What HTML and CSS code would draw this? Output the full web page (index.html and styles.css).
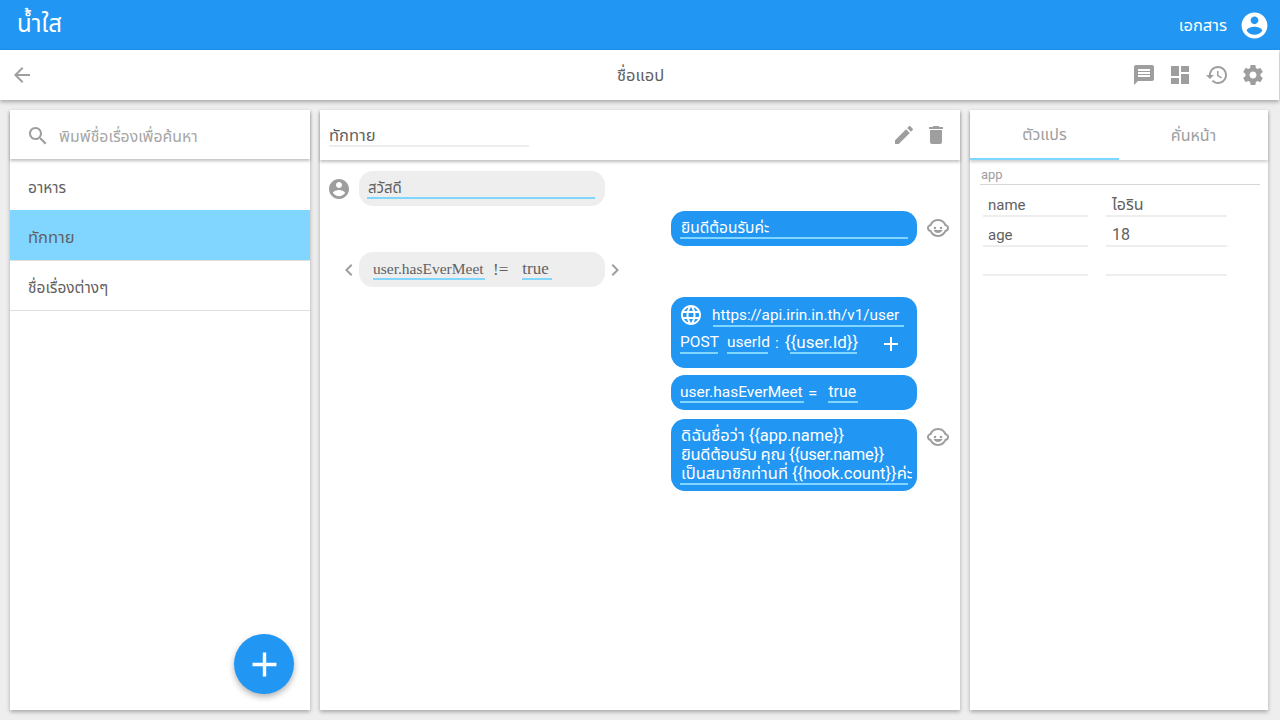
FILE: index.html
```html
<!DOCTYPE html>
<html lang="th">
<head>
    <meta charset="UTF-8">
    <meta name="viewport" content="width=device-width, initial-scale=1.0">
    <title>น้ำใส</title>
    <link rel="stylesheet" href="styles.css">
</head>
<body>
    <svg class="defs" aria-hidden="true">
        <symbol id="i-account" viewBox="0 0 24 24"><path d="M12 2C6.48 2 2 6.48 2 12s4.48 10 10 10 10-4.48 10-10S17.52 2 12 2zm0 3c1.66 0 3 1.34 3 3s-1.34 3-3 3-3-1.34-3-3 1.34-3 3-3zm0 14.2c-2.5 0-4.71-1.28-6-3.22.03-1.99 4-3.08 6-3.08 1.99 0 5.97 1.09 6 3.08-1.29 1.94-3.5 3.22-6 3.22z"/></symbol>
        <symbol id="i-child" viewBox="0 0 24 24"><circle cx="9" cy="12" r="1.25"/><circle cx="15" cy="12" r="1.25"/><path d="M22.94 12.66c.04-.21.06-.43.06-.66s-.02-.45-.06-.66c-.25-1.51-1.36-2.74-2.81-3.17-.53-1.12-1.28-2.1-2.19-2.91C16.36 3.85 14.28 3 12 3s-4.36.85-5.94 2.26c-.92.81-1.67 1.8-2.19 2.91-1.45.43-2.56 1.65-2.81 3.17-.04.21-.06.43-.06.66s.02.45.06.66c.25 1.51 1.36 2.74 2.81 3.17.52 1.11 1.27 2.09 2.17 2.89C7.62 20.14 9.71 21 12 21s4.38-.86 5.97-2.28c.9-.8 1.65-1.79 2.17-2.89 1.44-.43 2.55-1.65 2.8-3.17zM19 14c-.1 0-.19-.02-.29-.03-.2.67-.49 1.29-.86 1.86C16.6 17.74 14.45 19 12 19s-4.6-1.26-5.85-3.17c-.37-.57-.66-1.19-.86-1.86-.1.01-.19.03-.29.03-1.1 0-2-.9-2-2s.9-2 2-2c.1 0 .19.02.29.03.2-.67.49-1.29.86-1.86C7.4 6.26 9.55 5 12 5s4.6 1.26 5.85 3.17c.37.57.66 1.19.86 1.86.1-.01.19-.03.29-.03 1.1 0 2 .9 2 2s-.9 2-2 2zM7.5 14c.76 1.77 2.49 3 4.5 3s3.74-1.23 4.5-3h-9z"/></symbol>
        <symbol id="i-add" viewBox="0 0 24 24"><path d="M19 13h-6v6h-2v-6H5v-2h6V5h2v6h6v2z"/></symbol>
    </svg>

    <header class="appbar">
        <div class="brand">น้ำใส</div>
        <div class="appbar-right">
            <span class="doc-link">เอกสาร</span>
            <svg class="icon-account"><use href="#i-account"/></svg>
        </div>
    </header>

    <div class="subbar">
        <svg class="icon" viewBox="0 0 24 24"><path d="M20 11H7.83l5.59-5.59L12 4l-8 8 8 8 1.41-1.41L7.83 13H20v-2z"/></svg>
        <div class="subbar-title">ชื่อแอป</div>
        <div class="subbar-actions">
            <svg class="icon" viewBox="0 0 24 24"><path d="M20 2H4c-1.1 0-1.99.9-1.99 2L2 22l4-4h14c1.1 0 2-.9 2-2V4c0-1.1-.9-2-2-2zm-2 12H6v-2h12v2zm0-3H6V9h12v2zm0-3H6V6h12v2z"/></svg>
            <svg class="icon" viewBox="0 0 24 24"><path d="M3 13h8V3H3v10zm0 8h8v-6H3v6zm10 0h8V11h-8v10zm0-18v6h8V3h-8z"/></svg>
            <svg class="icon" viewBox="0 0 24 24"><path d="M13 3c-4.97 0-9 4.03-9 9H1l3.89 3.89.07.14L9 12H6c0-3.87 3.13-7 7-7s7 3.13 7 7-3.13 7-7 7c-1.93 0-3.68-.79-4.94-2.06l-1.42 1.42C8.27 19.99 10.51 21 13 21c4.97 0 9-4.03 9-9s-4.03-9-9-9zm-1 5v5l4.28 2.54.72-1.21-3.5-2.08V8H12z"/></svg>
            <svg class="icon" viewBox="0 0 24 24"><path d="M19.43 12.98c.04-.32.07-.64.07-.98s-.03-.66-.07-.98l2.11-1.65c.19-.15.24-.42.12-.64l-2-3.46c-.12-.22-.39-.3-.61-.22l-2.49 1c-.52-.4-1.08-.73-1.69-.98l-.38-2.65C14.46 2.18 14.25 2 14 2h-4c-.25 0-.46.18-.49.42l-.38 2.65c-.61.25-1.17.59-1.69.98l-2.49-1c-.23-.09-.49 0-.61.22l-2 3.46c-.13.22-.07.49.12.64l2.11 1.65c-.04.32-.07.65-.07.98s.03.66.07.98l-2.11 1.65c-.19.15-.24.42-.12.64l2 3.46c.12.22.39.3.61.22l2.49-1c.52.4 1.08.73 1.69.98l.38 2.65c.03.24.24.42.49.42h4c.25 0 .46-.18.49-.42l.38-2.65c.61-.25 1.17-.59 1.69-.98l2.49 1c.23.09.49 0 .61-.22l2-3.46c.12-.22.07-.49-.12-.64l-2.11-1.65zM12 15.5c-1.93 0-3.5-1.57-3.5-3.5s1.57-3.5 3.5-3.5 3.5 1.57 3.5 3.5-1.57 3.5-3.5 3.5z"/></svg>
        </div>
    </div>

    <main class="main">
        <section class="panel panel-stories">
            <div class="search">
                <svg class="icon" viewBox="0 0 24 24"><path d="M15.5 14h-.79l-.28-.27C15.41 12.59 16 11.11 16 9.5 16 5.91 13.09 3 9.5 3S3 5.91 3 9.5 5.91 16 9.5 16c1.61 0 3.09-.59 4.23-1.57l.27.28v.79l5 4.99L20.49 19l-4.99-5zm-6 0C7.01 14 5 11.99 5 9.5S7.01 5 9.5 5 14 7.01 14 9.5 11.99 14 9.5 14z"/></svg>
                <span class="search-hint">พิมพ์ชื่อเรื่องเพื่อค้นหา</span>
            </div>
            <ul class="story-list">
                <li class="story">อาหาร</li>
                <li class="story story-active">ทักทาย</li>
                <li class="story">ชื่อเรื่องต่างๆ</li>
            </ul>
            <button class="fab"><svg class="icon-fab"><use href="#i-add"/></svg></button>
        </section>

        <section class="panel panel-chat">
            <div class="chat-head">
                <span class="chat-name">ทักทาย</span>
                <div class="chat-tools">
                    <svg class="icon" viewBox="0 0 24 24"><path d="M3 17.25V21h3.75L17.81 9.94l-3.75-3.75L3 17.25zM20.71 7.04c.39-.39.39-1.02 0-1.41l-2.34-2.34c-.39-.39-1.02-.39-1.41 0l-1.83 1.83 3.75 3.75 1.83-1.83z"/></svg>
                    <svg class="icon" viewBox="0 0 24 24"><path d="M6 19c0 1.1.9 2 2 2h8c1.1 0 2-.9 2-2V7H6v12zM19 4h-3.5l-1-1h-5l-1 1H5v2h14V4z"/></svg>
                </div>
            </div>

            <div class="row row-user row-first">
                <svg class="icon"><use href="#i-account"/></svg>
                <div class="bubble bubble-gray bubble-hello"><span class="field field-full">สวัสดี</span></div>
            </div>

            <div class="row row-bot row-greet">
                <div class="bubble bubble-blue"><span class="field field-full">ยินดีต้อนรับค่ะ</span></div>
                <svg class="icon"><use href="#i-child"/></svg>
            </div>

            <div class="row row-cond">
                <svg class="chevron" viewBox="8 6 8 12"><path d="M15.41 7.41L14 6l-6 6 6 6 1.41-1.41L10.83 12z"/></svg>
                <div class="bubble bubble-gray bubble-cond">
                    <span class="field cond-left">user.hasEverMeet</span>
                    <span class="cond-op">!=</span>
                    <span class="field cond-right">true</span>
                </div>
                <svg class="chevron" viewBox="8 6 8 12"><path d="M10 6L8.59 7.41 13.17 12l-4.58 4.58L10 18l6-6z"/></svg>
            </div>

            <div class="row row-bot row-api">
                <div class="bubble bubble-blue bubble-api">
                    <div class="api-url">
                        <svg class="icon-globe" viewBox="0 0 24 24"><path d="M11.99 2C6.47 2 2 6.48 2 12s4.47 10 9.99 10C17.52 22 22 17.52 22 12S17.52 2 11.99 2zm6.93 6h-2.95c-.32-1.25-.78-2.45-1.38-3.56 1.84.63 3.37 1.91 4.33 3.56zM12 4.04c.83 1.2 1.48 2.53 1.91 3.96h-3.82c.43-1.43 1.08-2.76 1.91-3.96zM4.26 14C4.1 13.36 4 12.69 4 12s.1-1.36.26-2h3.38c-.08.66-.14 1.32-.14 2 0 .68.06 1.34.14 2H4.26zm.82 2h2.95c.32 1.25.78 2.45 1.38 3.56-1.84-.63-3.37-1.9-4.33-3.56zm2.95-8H5.08c.96-1.66 2.49-2.93 4.33-3.56C8.81 5.55 8.35 6.75 8.03 8zM12 19.96c-.83-1.2-1.48-2.53-1.91-3.96h3.82c-.43 1.43-1.08 2.76-1.91 3.96zM14.34 14H9.66c-.09-.66-.16-1.32-.16-2 0-.68.07-1.35.16-2h4.68c.09.65.16 1.32.16 2 0 .68-.07 1.34-.16 2zm.25 5.56c.6-1.11 1.06-2.31 1.38-3.56h2.95c-.96 1.65-2.49 2.93-4.33 3.56zM16.36 14c.08-.66.14-1.32.14-2 0-.68-.06-1.34-.14-2h3.38c.16.64.26 1.31.26 2s-.1 1.36-.26 2h-3.38z"/></svg>
                        <span class="field url-field">https://api.irin.in.th/v1/user</span>
                    </div>
                    <div class="api-params">
                        <span class="field method">POST</span>
                        <span class="field param-key">userId</span>
                        <span class="param-sep">:</span>
                        <span class="param-val">{{user.Id}}</span>
                        <svg class="icon-add"><use href="#i-add"/></svg>
                    </div>
                </div>
                <span class="slot"></span>
            </div>

            <div class="row row-bot row-set">
                <div class="bubble bubble-blue bubble-assign">
                    <span class="field set-left">user.hasEverMeet</span>
                    <span class="set-op">=</span>
                    <span class="field set-right">true</span>
                </div>
                <span class="slot"></span>
            </div>

            <div class="row row-bot row-text">
                <div class="bubble bubble-blue bubble-text">
                    <span class="field field-full field-lines">ดิฉันชื่อว่า {{app.name}}<br><span class="line-tight">ยินดีต้อนรับ คุณ {{user.name}}</span><br>เป็นสมาชิกท่านที่ {{hook.count}}ค่ะ</span>
                </div>
                <svg class="icon"><use href="#i-child"/></svg>
            </div>
        </section>

        <section class="panel panel-vars">
            <div class="tabs">
                <div class="tab tab-active">ตัวแปร</div>
                <div class="tab">คั่นหน้า</div>
            </div>
            <div class="group-name">app</div>
            <div class="var-grid">
                <span class="var-cell">name</span><span class="var-cell">ไอริน</span>
                <span class="var-cell">age</span><span class="var-cell">18</span>
                <span class="var-cell"></span><span class="var-cell"></span>
            </div>
        </section>
    </main>
</body>
</html>
```

FILE: styles.css
```css
* {
    box-sizing: border-box;
}
html, body {
    height: 720px;
    overflow: hidden;
}
body {
    margin: 0;
    background-color: #eeeeee;
    color: #616161;
    font-family: Roboto, "Noto Sans", "Noto Sans Thai", "DejaVu Sans", sans-serif;
    font-size: 15px;
}
.defs {
    display: none;
}
.icon {
    display: block;
    width: 24px;
    height: 24px;
    flex: none;
    fill: #9e9e9e;
}

/* top bars */
.appbar {
    display: flex;
    align-items: center;
    justify-content: space-between;
    height: 50px;
    padding: 0 10px 0 17px;
    background-color: #2196f3;
    color: #fff;
}
.brand {
    font-size: 24px;
}
.appbar-right {
    display: flex;
    align-items: center;
    gap: 12px;
}
.doc-link {
    font-size: 16.5px;
}
.icon-account {
    width: 31px;
    height: 31px;
    fill: #fff;
}
.subbar {
    position: relative;
    display: flex;
    align-items: center;
    justify-content: space-between;
    height: 50px;
    margin-right: 1px;
    padding: 0 14px 0 10px;
    background-color: #fff;
    box-shadow: 0 2px 4px rgba(0, 0, 0, 0.3);
}
.subbar-title {
    margin: 1px 0 0 115px;
    font-size: 16.5px;
}
.subbar-actions {
    display: flex;
    gap: 12.3px;
}

/* columns */
.main {
    display: flex;
    gap: 10px;
    height: 620px;
    padding: 10px 12px 10px 10px;
}
.panel {
    position: relative;
    background-color: #fff;
    box-shadow: 0 2px 4px rgba(0, 0, 0, 0.3);
}
.panel-stories {
    width: 300px;
}
.panel-chat {
    width: 640px;
}
.panel-vars {
    width: 298px;
}

/* stories */
.search {
    position: relative;
    display: flex;
    align-items: center;
    gap: 9px;
    height: 49px;
    padding: 2px 0 0 16px;
    box-shadow: 0 2px 3px rgba(0, 0, 0, 0.25);
}
.search-hint {
    margin-top: 2px;
    color: #a6a6a6;
    font-size: 15.8px;
}
.story-list {
    margin: 0;
    padding: 0;
    list-style: none;
}
.story {
    display: flex;
    align-items: center;
    height: 50px;
    padding: 6px 0 0 18px;
    border-bottom: 1px solid #e0e0e0;
    font-size: 15.5px;
}
.story:first-child {
    height: 51px;
    padding-top: 8px;
    border-bottom: 0;
}
.story-active {
    height: 51px;
    padding-top: 4px;
    background-color: #80d6ff;
    font-size: 16.5px;
}
.fab {
    position: absolute;
    right: 16px;
    bottom: 16px;
    display: flex;
    align-items: center;
    justify-content: center;
    width: 60px;
    height: 60px;
    padding: 0;
    border: 0;
    border-radius: 50%;
    background-color: #2196f3;
    box-shadow: 0 3px 6px rgba(0, 0, 0, 0.3);
}
.icon-fab {
    width: 41px;
    height: 41px;
    fill: #fff;
}

/* chat */
.chat-head {
    display: flex;
    align-items: center;
    justify-content: space-between;
    height: 50px;
    padding: 0 12px 0 9px;
    box-shadow: 0 2px 3px rgba(0, 0, 0, 0.25);
}
.chat-name {
    width: 200px;
    height: 24px;
    padding-top: 3px;
    border-bottom: 2px solid #eeeeee;
    font-size: 16.5px;
    line-height: 20px;
}
.chat-tools {
    display: flex;
    gap: 8px;
}
.row {
    display: flex;
    align-items: center;
}
.row-user {
    gap: 8px;
    padding-left: 7px;
}
.row-first {
    margin-top: 11px;
}
.row-bot {
    justify-content: flex-end;
    gap: 9px;
    padding-right: 10px;
}
.row-bot .icon {
    margin-top: -1px;
}
.row-greet {
    margin-top: 5px;
}
.row-cond {
    gap: 6px;
    margin-top: 6px;
    padding-left: 25px;
}
.row-api {
    margin-top: 10px;
}
.row-set {
    margin-top: 7px;
}
.row-text {
    align-items: flex-start;
    margin-top: 9px;
}
.row-text .icon {
    margin-top: 6px;
}
.slot {
    width: 24px;
    flex: none;
}
.chevron {
    width: 8px;
    height: 12px;
    fill: #9e9e9e;
}
.bubble {
    width: 246px;
    border-radius: 14px;
    padding: 0 9px 7px 9px;
    font-size: 15.5px;
}
.bubble-gray {
    background-color: #eeeeee;
}
.bubble-blue {
    background-color: #2196f3;
    color: #fff;
}
.bubble-hello {
    padding: 0 10px 7px 8px;
    font-size: 15px;
}
.field {
    display: inline-block;
    border-bottom: 2px solid #80d6ff;
}
.field-full {
    display: block;
    height: 28px;
    padding: 8px 0 0 1px;
    line-height: 18px;
}
.field-lines {
    height: auto;
}
.bubble-text {
    height: 72px;
    padding-bottom: 0;
    font-size: 16.5px;
}
.bubble-text .field-lines {
    padding-top: 7px;
    line-height: 19px;
    white-space: nowrap;
}
.line-tight {
    letter-spacing: -0.3px;
}

.bubble-cond {
    display: flex;
    align-items: flex-end;
    height: 35px;
    padding: 0 0 7px 14px;
    font-family: "Liberation Serif", serif;
    font-size: 15.5px;
}
.cond-left {
    width: 112px;
    line-height: 18px;
}
.cond-op {
    margin-left: 8px;
    line-height: 20px;
    font-size: 17px;
}
.cond-right {
    width: 30px;
    margin-left: 14px;
    line-height: 18px;
    font-size: 17px;
}
.bubble-api {
    height: 71px;
    padding: 0 0 0 8px;
}
.api-url {
    display: flex;
    align-items: center;
    height: 32px;
    padding-top: 3px;
}
.icon-globe {
    width: 24px;
    height: 24px;
    fill: #fff;
}
.url-field {
    width: 191px;
    margin: 2px 0 0 10px;
    text-indent: -1px;
    line-height: 20px;
    font-size: 15.3px;
    white-space: nowrap;
}
.api-params {
    display: flex;
    align-items: center;
    height: 28px;
    padding-left: 1px;
}
.method {
    width: 38px;
    line-height: 20px;
}
.param-key {
    width: 41px;
    margin-left: 9px;
    line-height: 20px;
}
.param-sep {
    margin-left: 7px;
}
.param-val {
    margin-left: 6px;
    padding-bottom: 2px;
    line-height: 20px;
    font-size: 17px;
    white-space: nowrap;
    background: linear-gradient(#80d6ff, #80d6ff) 5px 100% / 67px 2px no-repeat;
}
.icon-add {
    width: 24px;
    height: 24px;
    margin: 2px 14px 0 auto;
    fill: #fff;
}
.bubble-assign {
    display: flex;
    align-items: flex-end;
    height: 35px;
    padding: 0 0 7px 9px;
}
.set-left {
    width: 124px;
    line-height: 18px;
    white-space: nowrap;
}
.set-op {
    margin-left: 4px;
    line-height: 20px;
    font-size: 17px;
}
.set-right {
    width: 30px;
    margin-left: 11px;
    line-height: 18px;
    font-size: 16px;
}

/* variables */
.tabs {
    display: flex;
    height: 50px;
    box-shadow: 0 2px 3px rgba(0, 0, 0, 0.2);
}
.tab {
    display: flex;
    align-items: center;
    justify-content: center;
    width: 149px;
    padding-top: 2px;
    color: #9e9e9e;
    font-size: 16px;
}
.tab-active {
    border-bottom: 2px solid #80d6ff;
}
.group-name {
    height: 25px;
    margin: 0 8px 0 10px;
    padding: 7px 0 0 1px;
    border-bottom: 1px solid #d6d6d6;
    color: #9e9e9e;
    font-size: 13px;
}
.var-grid {
    display: grid;
    grid-template-columns: 105px 121px;
    grid-template-rows: 30px 30px 29px;
    column-gap: 18px;
    margin: 2px 0 0 13px;
}
.var-cell {
    padding: 9px 0 0 5px;
    border-bottom: 2px solid #eeeeee;
    line-height: 18px;
    font-size: 15px;
}
.var-cell:nth-child(even) {
    padding-left: 6px;
    font-size: 16px;
}
```
